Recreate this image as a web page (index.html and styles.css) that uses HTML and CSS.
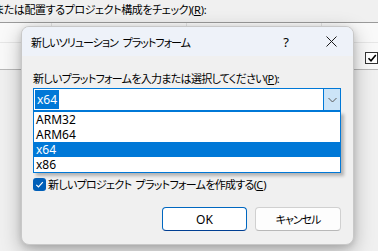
FILE: index.html
```html
<!DOCTYPE html>
<html lang="ja">
<head>
<meta charset="utf-8">
<link rel="stylesheet" href="styles.css">
</head>
<body>
<div class="page">
  <div class="bg-caption">または配置するプロジェクト構成をチェック)(<u>R</u>):</div>
  <div class="bg-table">
    <div class="bg-row bg-head">
      <div class="bg-cell c1"></div><div class="bg-cell c2"></div><div class="bg-cell c3"></div><div class="bg-cell c4"></div>
    </div>
    <div class="bg-row bg-body">
      <div class="bg-cell c1"></div><div class="bg-cell c2"></div><div class="bg-cell c3"></div>
      <div class="bg-cell c4"><span class="bg-check">
        <svg width="10" height="10" viewBox="0 0 10 10"><path d="M1.5 5.2 L4 7.8 L8.8 2" fill="none" stroke="#000" stroke-width="1.6"/></svg>
      </span></div>
    </div>
  </div>

  <div class="dialog">
    <div class="titlebar">
      <span class="title">新しいソリューション プラットフォーム</span>
      <span class="tb-help">?</span>
      <span class="tb-close">
        <svg width="11" height="11" viewBox="0 0 11 11"><path d="M0.5 0.5 L10.5 10.5 M10.5 0.5 L0.5 10.5" stroke="#1a1a1a" stroke-width="1"/></svg>
      </span>
    </div>
    <div class="content">
      <div class="label">新しいプラットフォームを入力または選択してください(<u>P</u>):</div>
      <div class="combo">
        <div class="combo-field"><span class="sel-text">x64</span></div>
        <div class="combo-btn">
          <svg width="9" height="6" viewBox="0 0 9 6"><path d="M0.5 1 L4.5 5 L8.5 1" fill="none" stroke="#5a5a5a" stroke-width="1"/></svg>
        </div>
      </div>
      <div class="listbox">
        <div class="item">ARM32</div>
        <div class="item">ARM64</div>
        <div class="item selected">x64</div>
        <div class="item">x86</div>
      </div>
      <div class="checkrow">
        <span class="checkbox">
          <svg width="9" height="9" viewBox="0 0 9 9"><path d="M1.3 4.8 L3.5 7 L7.8 2.2" fill="none" stroke="#fff" stroke-width="1.2"/></svg>
        </span>
        <span class="check-label">新しいプロジェクト プラットフォームを作成する(<u>C</u>)</span>
      </div>
      <div class="buttons">
        <button class="btn btn-default">OK</button>
        <button class="btn">キャンセル</button>
      </div>
    </div>
  </div>
</div>
</body>
</html>
```

FILE: styles.css
```css
* { box-sizing: border-box; }
html, body {
  margin: 0;
  padding: 0;
}
body {
  width: 378px;
  height: 251px;
  overflow: hidden;
  background: #f0f0f0;
  font-family: "Noto Sans", "Noto Sans CJK JP", sans-serif;
  font-size: 11px;
  letter-spacing: -0.7px;
  word-spacing: 2px;
  color: #000;
  font-feature-settings: "palt";
}
.page {
  position: relative;
  width: 378px;
  height: 251px;
  overflow: hidden;
}
u { text-decoration: underline; text-underline-offset: 1px; letter-spacing: 0; }

.bg-caption {
  height: 22px;
  line-height: 20px;
  margin-left: -6px;
  letter-spacing: -0.4px;
  white-space: nowrap;
}
.bg-table {
  border-top: 1px solid #9a9a9a;
  border-bottom: 1px solid #b8b8b8;
  background: #f9f9f9;
}
.bg-row {
  display: flex;
}
.bg-head { height: 20px; border-bottom: 1px solid #e6e6e6; }
.bg-body { height: 26px; }
.bg-cell { border-right: 1px solid #e3e3e3; }
.c1 { width: 52px; }
.c2 { width: 135px; }
.c3 { width: 135px; }
.c4 { flex: 1; border-right: none; display: flex; align-items: center; padding-left: 43px; }
.bg-body .bg-cell { border-right-color: transparent; }
.bg-body .c4 { padding-top: 4px; }
.bg-check {
  width: 13px;
  height: 12px;
  border: 1px solid #333;
  background: #fff;
  display: flex;
  align-items: center;
  justify-content: center;
}

.dialog {
  position: absolute;
  left: 21px;
  top: 26px;
  width: 333px;
  height: 219px;
  border: 1px solid #c8c8c8;
  border-radius: 8px;
  background: #f0f0f0;
  box-shadow: 0 6px 20px rgba(0, 0, 0, 0.28), 0 2px 6px rgba(0, 0, 0, 0.12);
  overflow: hidden;
  display: flex;
  flex-direction: column;
}
.titlebar {
  height: 29px;
  background: #eef2f9;
  display: flex;
  align-items: center;
  padding-left: 9px;
}
.title { flex: 1; padding-top: 1px; letter-spacing: -1px; word-spacing: 3px; }
.tb-help {
  width: 10px;
  margin-right: 35px;
  font-size: 13px;
  letter-spacing: 0;
  text-align: center;
}
.tb-close {
  width: 11px;
  margin-right: 16px;
  display: flex;
}

.content {
  flex: 1;
  padding: 14px 0 0 11px;
  display: flex;
  flex-direction: column;
}
.label {
  height: 18px;
  line-height: 18px;
  white-space: nowrap;
}
.combo {
  width: 308px;
  height: 23px;
  border: 1px solid #0078d7;
  background: #fff;
  display: flex;
}
.combo-field {
  flex: 1;
  padding: 1px 0 0 1px;
}
.sel-text {
  display: inline-block;
  background: #0078d7;
  color: #fff;
  height: 19px;
  line-height: 19px;
  padding: 0 2px 0 2px;
  font-size: 12px;
  letter-spacing: 0;
}
.combo-btn {
  width: 17px;
  background: #cce4f7;
  border-left: 1px solid #0078d7;
  display: flex;
  align-items: center;
  justify-content: center;
}
.listbox {
  width: 308px;
  height: 62px;
  border: 1px solid #0078d7;
  background: #fff;
  box-shadow: 3px 3px 3px rgba(0, 0, 0, 0.25);
}
.item {
  height: 15px;
  line-height: 15px;
  padding-left: 2px;
  font-size: 12px;
  letter-spacing: 0;
}
.item.selected {
  background: #0078d7;
  color: #fff;
}
.checkrow {
  margin-top: 4px;
  height: 14px;
  display: flex;
  align-items: center;
  gap: 2px;
}
.checkbox {
  width: 13px;
  height: 13px;
  border-radius: 3px;
  background: #005fb8;
  display: flex;
  align-items: center;
  justify-content: center;
}
.check-label { white-space: nowrap; }
.buttons {
  margin-top: 16px;
  display: flex;
  gap: 8px;
  padding-left: 129px;
}
.btn {
  font: inherit;
  font-feature-settings: "palt";
  letter-spacing: -1px;
  color: #000;
  height: 24px;
  width: 86px;
  background: #fdfdfd;
  border: 1px solid #d0d0d0;
  border-bottom-color: #b8b8b8;
  border-radius: 4px;
  padding: 0;
}
.btn-default {
  width: 85px;
  font-size: 12px;
  letter-spacing: 0;
  border: 1px solid #0067c0;
  border-bottom-color: #003e92;
  background: #fff;
}
```
